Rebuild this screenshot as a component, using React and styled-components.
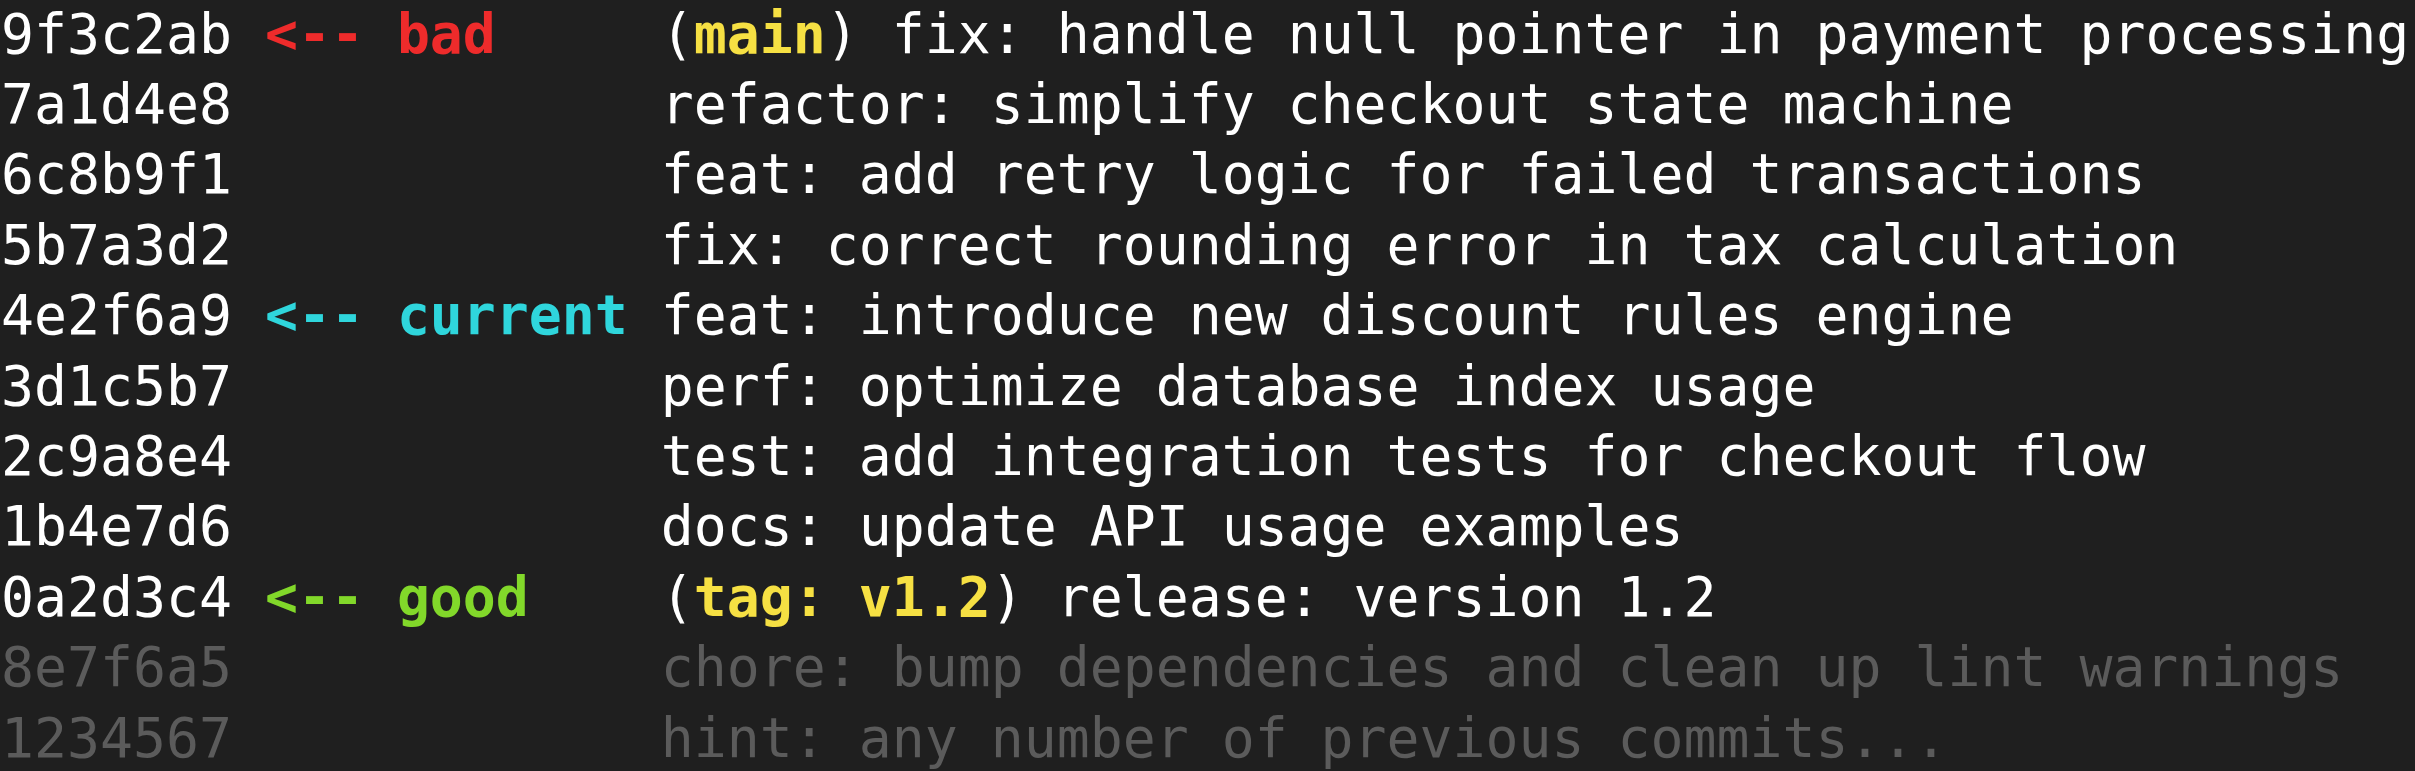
import React from "react";
import styled, { createGlobalStyle } from "styled-components";

const GlobalStyle = createGlobalStyle`
  html, body {
    margin: 0;
    padding: 0;
    background: #1f1f1f;
    height: 100%;
  }
`;

const COLORS = {
    bad: "#ee2b2b",
    current: "#2fd6dc",
    good: "#82d82a",
    ref: "#f6e043",
};

const COMMITS = [
    {hash: "9f3c2ab", mark: "bad", ref: "main", msg: "fix: handle null pointer in payment processing"},
    {hash: "7a1d4e8", msg: "refactor: simplify checkout state machine"},
    {hash: "6c8b9f1", msg: "feat: add retry logic for failed transactions"},
    {hash: "5b7a3d2", msg: "fix: correct rounding error in tax calculation"},
    {hash: "4e2f6a9", mark: "current", msg: "feat: introduce new discount rules engine"},
    {hash: "3d1c5b7", msg: "perf: optimize database index usage"},
    {hash: "2c9a8e4", msg: "test: add integration tests for checkout flow"},
    {hash: "1b4e7d6", msg: "docs: update API usage examples"},
    {hash: "0a2d3c4", mark: "good", ref: "tag: v1.2", msg: "release: version 1.2"},
    {hash: "8e7f6a5", faded: true, msg: "chore: bump dependencies and clean up lint warnings"},
    {hash: "1234567", faded: true, msg: "hint: any number of previous commits..."},
];

const Terminal = styled.div`
   display: flex;
   flex-direction: column;
   margin-top: -1.5px;
   padding-left: 1px;
   font-family: "DejaVu Sans Mono", monospace;
   font-size: 54.8px;
   line-height: 70.4px;
   color: #ffffff;
   white-space: pre;
`;

const Row = styled.div`
   display: flex;
   color: ${({faded}) => faded ? "#5b5b5b" : "#ffffff"};
`;

const Hash = styled.span`
   width: 8ch;
   flex-shrink: 0;
`;

const Marker = styled.span`
   width: 12ch;
   flex-shrink: 0;
   font-weight: bold;
   color: ${({kind}) => COLORS[kind] || "inherit"};
`;

const Message = styled.span``;

const RefName = styled.span`
   font-weight: bold;
   color: ${COLORS.ref};
`;

const App = () => (
    <>
        <GlobalStyle/>
        <Terminal>
            {COMMITS.map(c => (
                <Row key={c.hash} faded={c.faded}>
                    <Hash>{c.hash}</Hash>
                    <Marker kind={c.mark}>{c.mark ? "<-- " + c.mark : ""}</Marker>
                    <Message>
                        {c.ref && <>(<RefName>{c.ref}</RefName>) </>}
                        {c.msg}
                    </Message>
                </Row>
            ))}
        </Terminal>
    </>
);

export default App;
